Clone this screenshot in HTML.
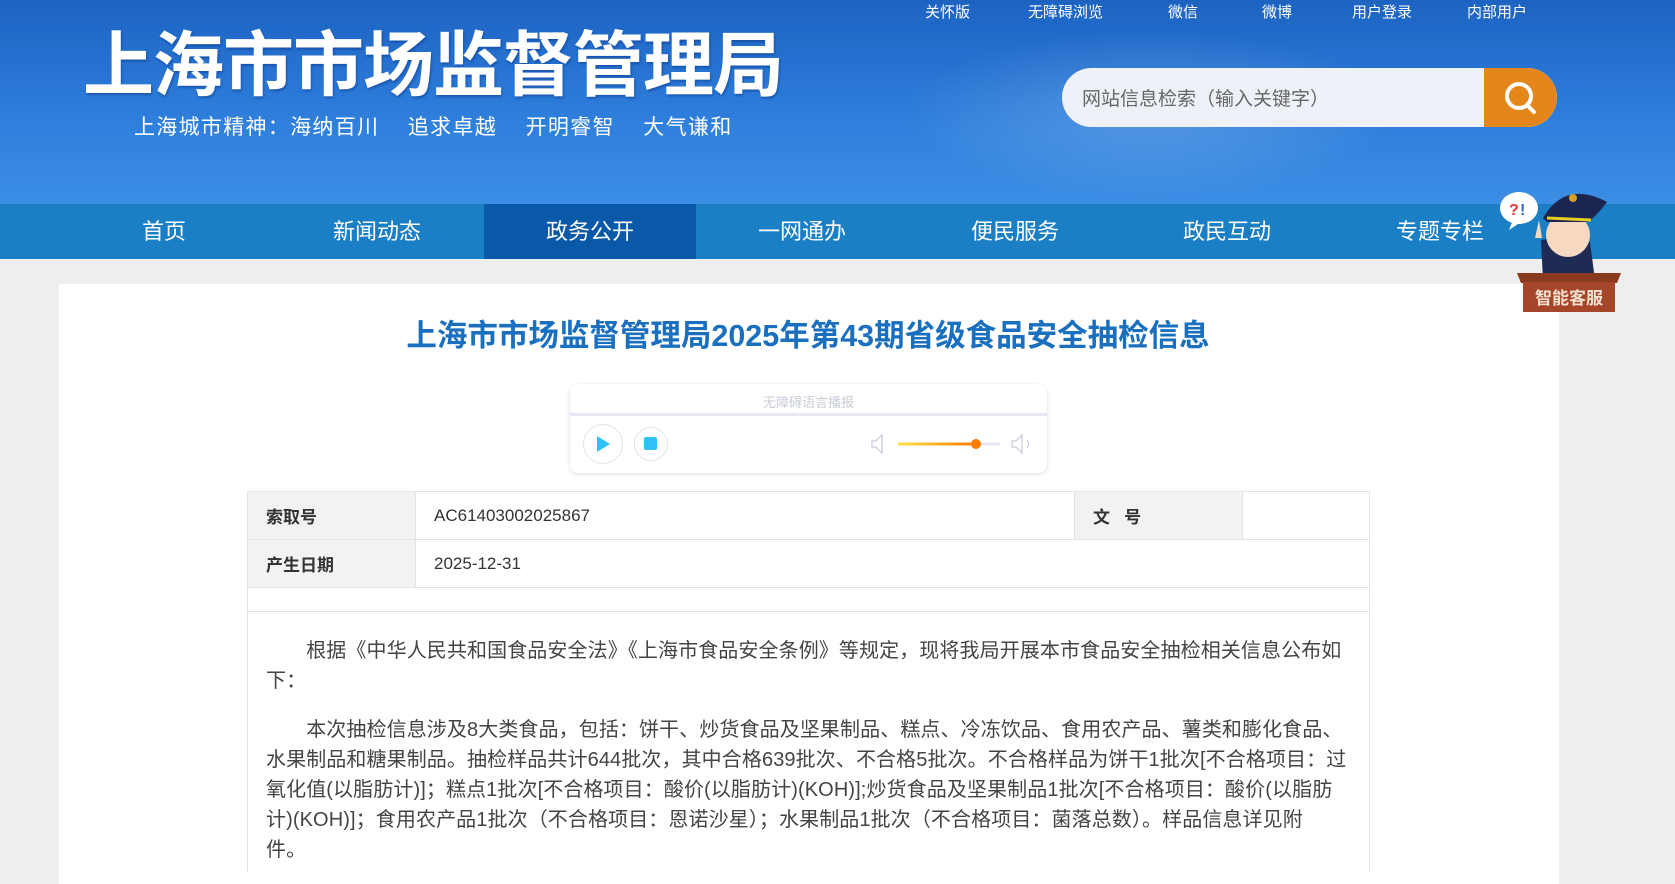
<!DOCTYPE html>
<html><head><meta charset="utf-8"><style>
*{margin:0;padding:0;box-sizing:border-box}
body{width:1675px;height:870px;overflow:hidden;background:#eeeeee;font-family:"Liberation Sans","Noto Sans CJK SC",sans-serif;position:relative}
.hdr{position:absolute;left:0;top:0;width:1675px;height:204px;background:linear-gradient(180deg,#1d63c2 0%,#2f7fdc 60%,#3b8ee4 100%)}
.hdr:before{content:"";position:absolute;left:900px;top:30px;width:500px;height:170px;background:radial-gradient(ellipse at center,rgba(255,255,255,.18),rgba(255,255,255,0) 70%)}
.top{position:absolute;top:1px;color:#fff;font-size:15px;white-space:nowrap}
.logo{position:absolute;left:83px;top:9px;color:#fff;font-size:71px;font-weight:bold;letter-spacing:-1px;white-space:nowrap;font-family:"Noto Sans CJK SC",sans-serif;text-shadow:1px 2px 2px rgba(0,40,120,.4)}
.slogan{position:absolute;left:134px;top:111px;color:#fff;font-size:21px;letter-spacing:1.3px;white-space:nowrap}
.search{position:absolute;left:1062px;top:68px;width:495px;height:59px;border-radius:30px;background:#eef2f8;overflow:hidden}
.search span{position:absolute;left:20px;top:16px;color:#666;font-size:19px}
.search .btn{position:absolute;right:0;top:0;width:73px;height:59px;background:#e5861a;border-radius:0 30px 30px 0}
.nav{position:absolute;left:0;top:204px;width:1675px;height:55px;background:#1b7fc6}
.nav div{position:absolute;top:0;height:55px;width:212px;text-align:center;line-height:55px;color:#fff;font-size:22px}
.nav .on{background:#0a58a8}
.main{position:absolute;left:59px;top:284px;width:1500px;height:600px;background:#fff}
.title{position:absolute;left:0;width:1616px;top:311px;text-align:center;color:#1a70bf;font-size:30.5px;font-weight:bold;white-space:nowrap}
.audio{position:absolute;left:570px;top:384px;width:477px;height:89px;border-radius:8px;background:#fff;box-shadow:0 1px 4px rgba(0,0,0,.15)}
.audio .cap{position:absolute;left:0;width:100%;top:8px;text-align:center;font-size:13px;color:#c8ccd6}
.audio .bar{position:absolute;left:0;top:29px;width:100%;height:3px;background:#e6e9f0}
.circ{position:absolute;border:1px solid #e2e4ec;border-radius:50%}
table{position:absolute;left:247px;top:491px;width:1123px;border-collapse:collapse;font-size:17px}
td{border:1px solid #e4e4e4;height:48px;padding-left:18px;color:#333}
td.h{background:#f2f2f2;font-weight:bold;width:168px}
.body{position:absolute;left:266px;top:636px;font-size:20px;line-height:30px;color:#444;white-space:nowrap;letter-spacing:0.1px}
.body p{margin-bottom:19px}
</style></head><body>
<div class="hdr"></div>
<div class="top" style="left:925px">关怀版</div>
<div class="top" style="left:1028px">无障碍浏览</div>
<div class="top" style="left:1168px">微信</div>
<div class="top" style="left:1262px">微博</div>
<div class="top" style="left:1352px">用户登录</div>
<div class="top" style="left:1467px">内部用户</div>
<div class="logo">上海市市场监督管理局</div>
<div class="slogan">上海城市精神：海纳百川&nbsp;&nbsp;&nbsp;&nbsp;追求卓越&nbsp;&nbsp;&nbsp;&nbsp;开明睿智&nbsp;&nbsp;&nbsp;&nbsp;大气谦和</div>
<div class="search"><span>网站信息检索（输入关键字）</span><div class="btn">
<svg width="73" height="59" viewBox="0 0 73 59"><circle cx="35" cy="28" r="12" fill="none" stroke="#fff" stroke-width="4"/><line x1="43" y1="37" x2="50" y2="44" stroke="#fff" stroke-width="4" stroke-linecap="round"/></svg></div></div>
<div class="nav">
<div style="left:58px">首页</div><div style="left:271px">新闻动态</div><div class="on" style="left:484px">政务公开</div><div style="left:696px">一网通办</div><div style="left:909px">便民服务</div><div style="left:1121px">政民互动</div><div style="left:1334px">专题专栏</div>
</div>
<div class="main"></div>
<svg style="position:absolute;left:1495px;top:180px" width="130" height="135" viewBox="0 0 130 135">
<ellipse cx="24" cy="28" rx="19" ry="16" fill="#fff"/><path d="M18 40 L14 50 L26 42z" fill="#fff"/>
<text x="14" y="35" font-size="16" font-weight="bold" fill="#e33" font-family="Liberation Sans">?</text><text x="25" y="35" font-size="16" font-weight="bold" fill="#36c" font-family="Liberation Sans">!</text>
<path d="M46 60 Q70 55 95 62 L100 100 L48 100z" fill="#1d2b55"/>
<ellipse cx="73" cy="55" rx="22" ry="22" fill="#f6d9c0"/>
<path d="M48 38 Q70 0 112 22 Q100 38 92 42 L52 42z" fill="#1a2550"/>
<path d="M52 38 L96 40" stroke="#e8d020" stroke-width="3"/>
<circle cx="78" cy="18" r="4" fill="#d4a020"/>
<path d="M40 58 L44 40 L47 58" fill="#f6d9c0"/>
<path d="M22 93 L126 93 L122 103 L26 103z" fill="#8a3a1e"/>
<rect x="28" y="102" width="92" height="30" fill="#a5452a"/>
<text x="74" y="124" text-anchor="middle" font-size="17" font-weight="bold" fill="#f3e0d0" font-family="Noto Sans CJK SC">智能客服</text>
</svg>
<div class="title">上海市市场监督管理局2025年第43期省级食品安全抽检信息</div>
<div class="audio"><div class="cap">无障碍语言播报</div><div class="bar"></div>
<div class="circ" style="left:13px;top:40px;width:40px;height:40px"></div>
<svg style="position:absolute;left:26px;top:51px" width="16" height="18"><path d="M1 1 L14 9 L1 17z" fill="#2fc1f5"/></svg>
<div class="circ" style="left:64px;top:43px;width:34px;height:34px"></div>
<div style="position:absolute;left:74px;top:53px;width:13px;height:13px;background:#2fc1f5;border-radius:2px"></div>
<svg style="position:absolute;left:300px;top:48px" width="170" height="24">
<defs><linearGradient id="g" x1="0" y1="0" x2="1" y2="0"><stop offset="0" stop-color="#ffe24a"/><stop offset="1" stop-color="#ff7a00"/></linearGradient></defs>
<path d="M2 9 L6 9 L12 3 L12 21 L6 15 L2 15z" fill="none" stroke="#ccd" stroke-width="1.3"/>
<rect x="28" y="10.5" width="78" height="3" fill="url(#g)"/><rect x="106" y="10.5" width="24" height="3" fill="#e6e9f0"/>
<circle cx="106" cy="12" r="5" fill="#ff7a00"/>
<path d="M142 9 L146 9 L152 3 L152 21 L146 15 L142 15z" fill="none" stroke="#ccd" stroke-width="1.3"/><path d="M157 8 Q160 12 157 16" fill="none" stroke="#ccd" stroke-width="1.3"/></svg>
</div>
<table>
<tr><td class="h">索取号</td><td style="width:659px">AC61403002025867</td><td class="h">文&nbsp;&nbsp;&nbsp;号</td><td></td></tr>
<tr><td class="h">产生日期</td><td colspan="3">2025-12-31</td></tr>
<tr><td colspan="4" style="height:24px"></td></tr>
</table>
<div style="position:absolute;left:247px;top:612px;width:1px;height:260px;background:#e4e4e4"></div>
<div style="position:absolute;left:1369px;top:612px;width:1px;height:260px;background:#e4e4e4"></div>
<div class="body">
<p>　　根据《中华人民共和国食品安全法》《上海市食品安全条例》等规定，现将我局开展本市食品安全抽检相关信息公布如<br>下：</p>
<p>　　本次抽检信息涉及8大类食品，包括：饼干、炒货食品及坚果制品、糕点、冷冻饮品、食用农产品、薯类和膨化食品、<br>水果制品和糖果制品。抽检样品共计644批次，其中合格639批次、不合格5批次。不合格样品为饼干1批次[不合格项目：过<br>氧化值(以脂肪计)]；糕点1批次[不合格项目：酸价(以脂肪计)(KOH)];炒货食品及坚果制品1批次[不合格项目：酸价(以脂肪<br>计)(KOH)]；食用农产品1批次（不合格项目：恩诺沙星）；水果制品1批次（不合格项目：菌落总数）。样品信息详见附<br>件。</p>
</div>
</body></html>
